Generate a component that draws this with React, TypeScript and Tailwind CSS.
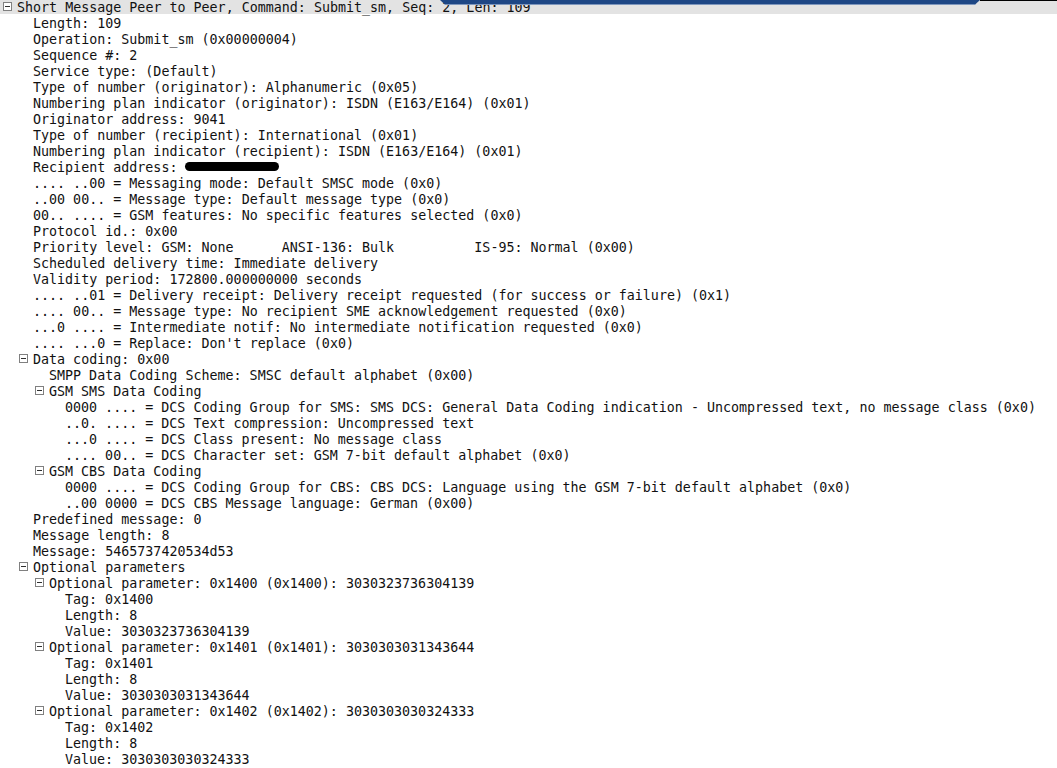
type Row = { level: number; text: string; open?: boolean; redact?: boolean };

const rows: Row[] = [
  { level: 0, open: true, text: "Short Message Peer to Peer, Command: Submit_sm, Seq: 2, Len: 109" },
  { level: 1, text: "Length: 109" },
  { level: 1, text: "Operation: Submit_sm (0x00000004)" },
  { level: 1, text: "Sequence #: 2" },
  { level: 1, text: "Service type: (Default)" },
  { level: 1, text: "Type of number (originator): Alphanumeric (0x05)" },
  { level: 1, text: "Numbering plan indicator (originator): ISDN (E163/E164) (0x01)" },
  { level: 1, text: "Originator address: 9041" },
  { level: 1, text: "Type of number (recipient): International (0x01)" },
  { level: 1, text: "Numbering plan indicator (recipient): ISDN (E163/E164) (0x01)" },
  { level: 1, text: "Recipient address: ", redact: true },
  { level: 1, text: ".... ..00 = Messaging mode: Default SMSC mode (0x0)" },
  { level: 1, text: "..00 00.. = Message type: Default message type (0x0)" },
  { level: 1, text: "00.. .... = GSM features: No specific features selected (0x0)" },
  { level: 1, text: "Protocol id.: 0x00" },
  { level: 1, text: "Priority level: GSM: None      ANSI-136: Bulk          IS-95: Normal (0x00)" },
  { level: 1, text: "Scheduled delivery time: Immediate delivery" },
  { level: 1, text: "Validity period: 172800.000000000 seconds" },
  { level: 1, text: ".... ..01 = Delivery receipt: Delivery receipt requested (for success or failure) (0x1)" },
  { level: 1, text: ".... 00.. = Message type: No recipient SME acknowledgement requested (0x0)" },
  { level: 1, text: "...0 .... = Intermediate notif: No intermediate notification requested (0x0)" },
  { level: 1, text: ".... ...0 = Replace: Don't replace (0x0)" },
  { level: 1, open: true, text: "Data coding: 0x00" },
  { level: 2, text: "SMPP Data Coding Scheme: SMSC default alphabet (0x00)" },
  { level: 2, open: true, text: "GSM SMS Data Coding" },
  { level: 3, text: "0000 .... = DCS Coding Group for SMS: SMS DCS: General Data Coding indication - Uncompressed text, no message class (0x0)" },
  { level: 3, text: "..0. .... = DCS Text compression: Uncompressed text" },
  { level: 3, text: "...0 .... = DCS Class present: No message class" },
  { level: 3, text: ".... 00.. = DCS Character set: GSM 7-bit default alphabet (0x0)" },
  { level: 2, open: true, text: "GSM CBS Data Coding" },
  { level: 3, text: "0000 .... = DCS Coding Group for CBS: CBS DCS: Language using the GSM 7-bit default alphabet (0x0)" },
  { level: 3, text: "..00 0000 = DCS CBS Message language: German (0x00)" },
  { level: 1, text: "Predefined message: 0" },
  { level: 1, text: "Message length: 8" },
  { level: 1, text: "Message: 5465737420534d53" },
  { level: 1, open: true, text: "Optional parameters" },
  { level: 2, open: true, text: "Optional parameter: 0x1400 (0x1400): 3030323736304139" },
  { level: 3, text: "Tag: 0x1400" },
  { level: 3, text: "Length: 8" },
  { level: 3, text: "Value: 3030323736304139" },
  { level: 2, open: true, text: "Optional parameter: 0x1401 (0x1401): 3030303031343644" },
  { level: 3, text: "Tag: 0x1401" },
  { level: 3, text: "Length: 8" },
  { level: 3, text: "Value: 3030303031343644" },
  { level: 2, open: true, text: "Optional parameter: 0x1402 (0x1402): 3030303030324333" },
  { level: 3, text: "Tag: 0x1402" },
  { level: 3, text: "Length: 8" },
  { level: 3, text: "Value: 3030303030324333" },
];

const indent = ["pl-0", "pl-4", "pl-8", "pl-12"];

function Toggle() {
  return (
    <span className="ml-[3px] mt-[1px] flex h-[9px] w-[9px] items-center justify-center border border-[#808080] bg-white">
      <span className="h-px w-[5px] bg-[#303030]" />
    </span>
  );
}

export default function App() {
  return (
    <div className="relative h-[768px] w-[1057px] overflow-hidden bg-white font-['DejaVu_Sans_Mono',monospace] text-[13.33px] text-[#111]">
      <ul className="mt-[-2px]">
        {rows.map((r, i) => (
          <li
            key={i}
            className={`flex h-4 items-center whitespace-pre ${indent[r.level]} ${i === 0 ? "bg-[#e3e3e3]" : ""}`}
          >
            <span className="flex w-[17px] shrink-0 items-center">{r.open && <Toggle />}</span>
            <span className="pt-[3px] leading-4">{r.text}</span>
            {r.redact && <span className="mt-[1px] h-[9px] w-[94px] rounded-full bg-black" />}
          </li>
        ))}
      </ul>
      {/* edge of another window over the top */}
      <div className="absolute left-[440px] top-0 h-[5px] w-[540px] border-b border-[#7d96bd] bg-[#1e4785] [clip-path:polygon(0_0,100%_0,99%_100%,1%_100%)]" />
      <div className="absolute right-0 top-0 h-px w-[77px] bg-black" />
    </div>
  );
}
